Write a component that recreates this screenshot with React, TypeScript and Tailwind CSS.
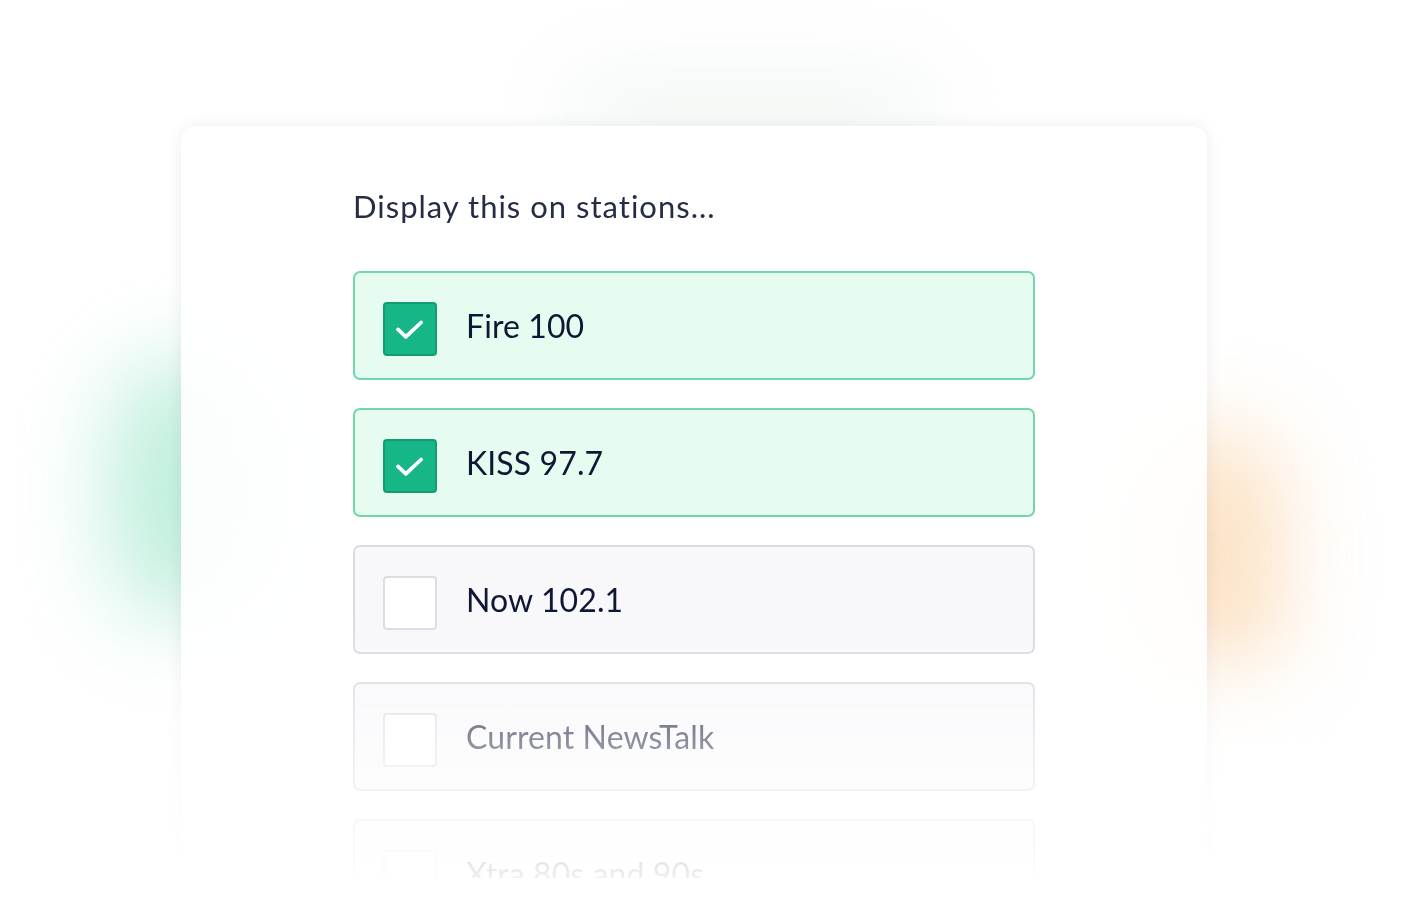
import React from "react";

type Station = {
  name: string;
  checked: boolean;
};

const stations: Station[] = [
  { name: "Fire 100", checked: true },
  { name: "KISS 97.7", checked: true },
  { name: "Now 102.1", checked: false },
  { name: "Current NewsTalk", checked: false },
  { name: "Xtra 80s and 90s", checked: false },
];

function Checkbox({ checked }: { checked: boolean }) {
  if (!checked) {
    return <div className="mt-[6px] h-[54px] w-[54px] shrink-0 rounded-[4px] border-2 border-[#dcdce1] bg-white" />;
  }
  return (
    <div className="mt-[6px] flex h-[54px] w-[54px] shrink-0 items-center justify-center rounded-[4px] border-2 border-[#109d72] bg-[#17b686]">
      <svg width="54" height="54" viewBox="0 0 54 54" fill="none">
        <path
          d="M14 27.5l8.5 8 16.5-15.5"
          stroke="white"
          strokeWidth="4"
          strokeLinecap="round"
          strokeLinejoin="round"
        />
      </svg>
    </div>
  );
}

function StationRow({ station }: { station: Station }) {
  return (
    <div
      className={
        station.checked
          ? "flex h-[109px] items-center gap-[29px] rounded-[7px] border-2 border-[#72d6ab] bg-[#e7fcf0] pl-[28px]"
          : "flex h-[109px] items-center gap-[29px] rounded-[7px] border-2 border-[#dadae0] bg-[#f8f8fb] pl-[28px]"
      }
    >
      <Checkbox checked={station.checked} />
      <span className="text-[32px] leading-none tracking-[0.1px] text-[#0f1734]">{station.name}</span>
    </div>
  );
}

export default function App() {
  return (
    <div
      className="relative h-[900px] w-full overflow-hidden bg-white"
      style={{ fontFamily: "Lato, 'Open Sans', sans-serif" }}
    >
      {/* background glows */}
      <div className="absolute left-[110px] top-[360px] h-[260px] w-[150px] rounded-full bg-[#a9e9d1] opacity-75 blur-[45px]" />
      <div className="absolute left-[1150px] top-[430px] h-[250px] w-[130px] rounded-full bg-[#fbd6ad] opacity-75 blur-[45px]" />
      <div className="absolute left-[560px] top-[70px] h-[80px] w-[380px] rounded-full bg-[#e6f1ea] opacity-50 blur-[40px]" />

      <div className="relative pl-[181px] pt-[126px]">
        <div className="h-[820px] w-[1026px] rounded-[16px] bg-white/[0.9] pl-[172px] pt-[62px] shadow-[0_0_16px_rgba(40,40,60,0.08)] backdrop-blur-[40px]">
          <h2 className="text-[31px] leading-[36px] tracking-[1px] text-[#272c45]">Display this on stations...</h2>
          <div className="mt-[47px] flex w-[682px] flex-col gap-[28px]">
            {stations.map((s) => (
              <StationRow key={s.name} station={s} />
            ))}
          </div>
        </div>
      </div>

      {/* fade-out towards the bottom */}
      <div className="pointer-events-none absolute inset-x-0 top-[620px] h-[280px] bg-gradient-to-b from-white/0 via-white/60 to-white" />
      <div className="pointer-events-none absolute inset-x-0 top-[878px] h-[22px] bg-white" />
    </div>
  );
}
